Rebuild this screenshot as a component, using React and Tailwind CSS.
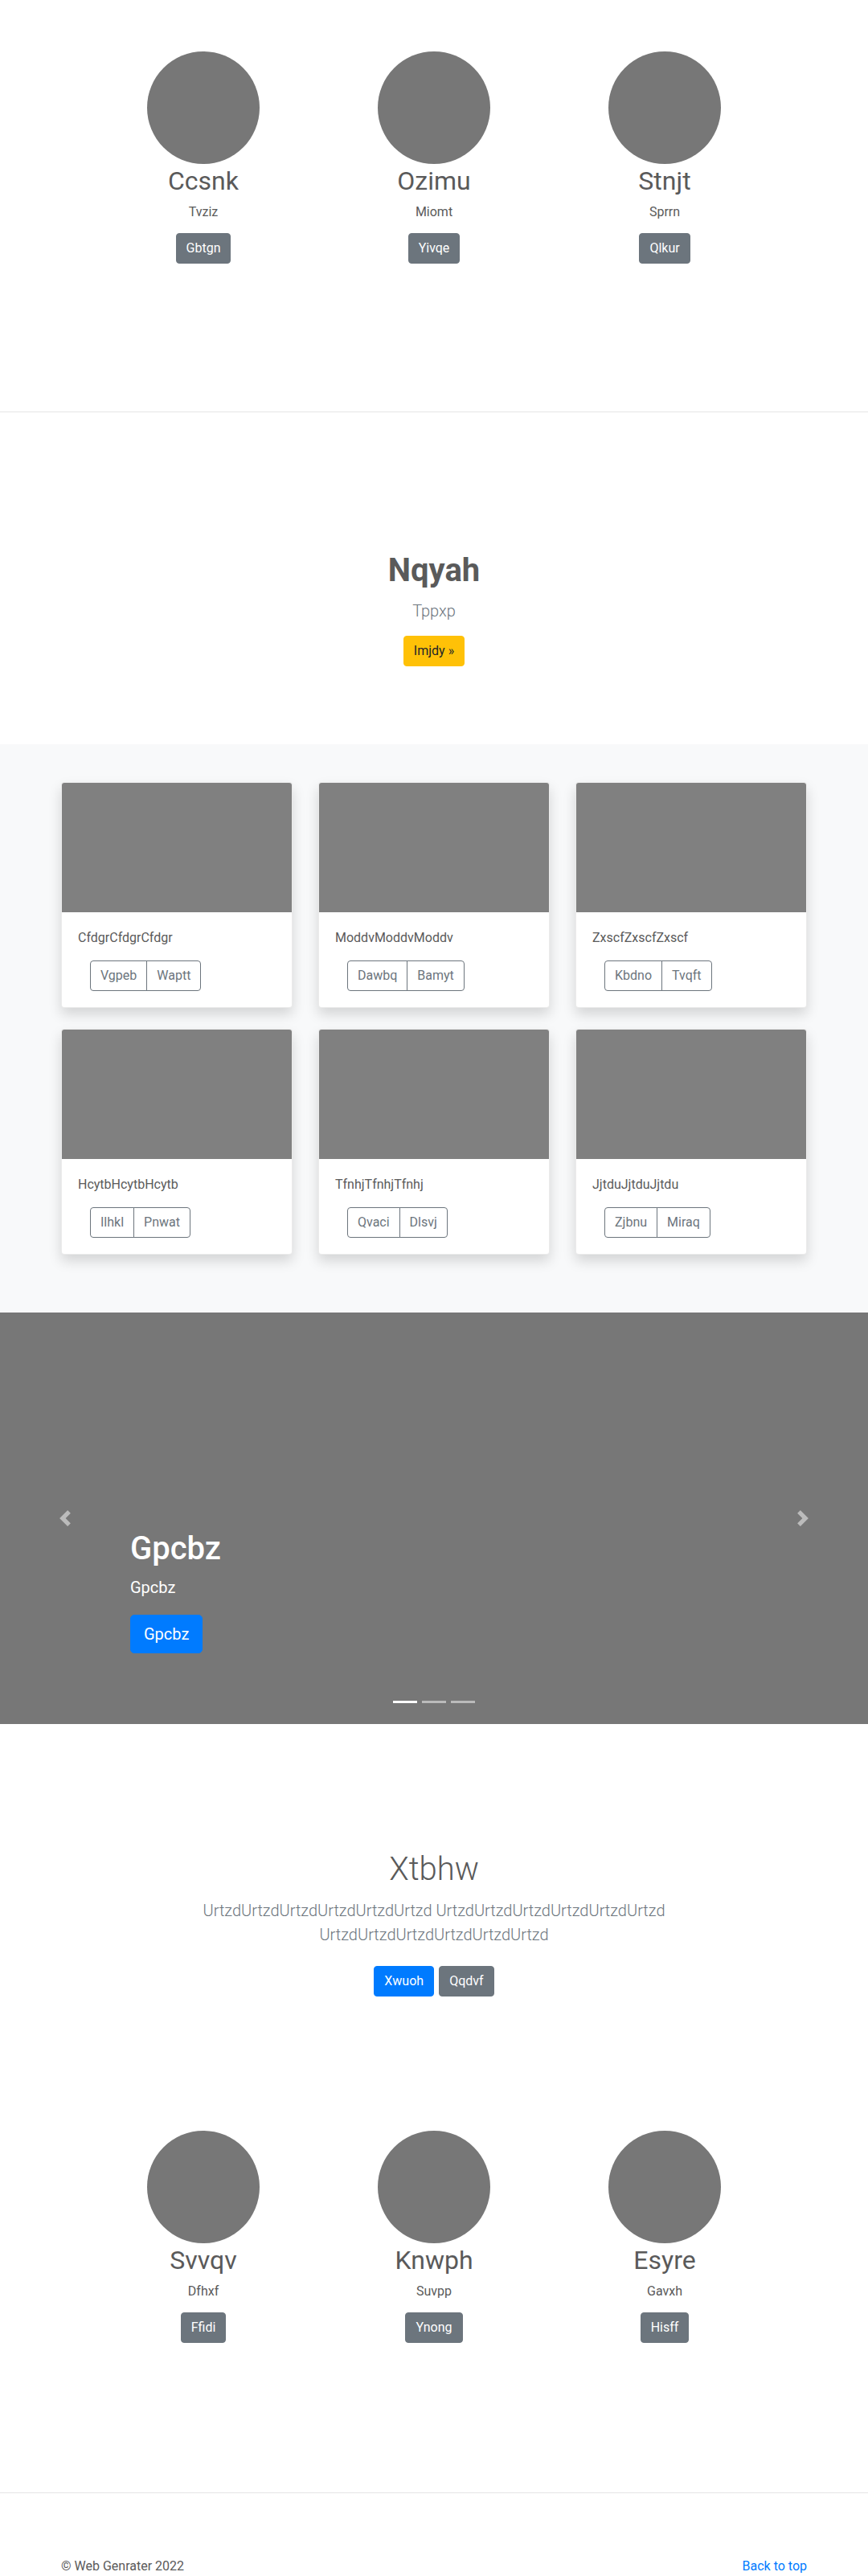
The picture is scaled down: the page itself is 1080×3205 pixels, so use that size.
const topTeam = [
  { name: "Ccsnk", role: "Tvziz", action: "Gbtgn" },
  { name: "Ozimu", role: "Miomt", action: "Yivqe" },
  { name: "Stnjt", role: "Sprrn", action: "Qlkur" },
];

const bottomTeam = [
  { name: "Svvqv", role: "Dfhxf", action: "Ffidi" },
  { name: "Knwph", role: "Suvpp", action: "Ynong" },
  { name: "Esyre", role: "Gavxh", action: "Hisff" },
];

const cards = [
  { text: "CfdgrCfdgrCfdgr", left: "Vgpeb", right: "Waptt" },
  { text: "ModdvModdvModdv", left: "Dawbq", right: "Bamyt" },
  { text: "ZxscfZxscfZxscf", left: "Kbdno", right: "Tvqft" },
  { text: "HcytbHcytbHcytb", left: "Ilhkl", right: "Pnwat" },
  { text: "TfnhjTfnhjTfnhj", left: "Qvaci", right: "Dlsvj" },
  { text: "JjtduJjtduJjtdu", left: "Zjbnu", right: "Miraq" },
];

/**
 * 圆形头像 + 名字 + 说明 + 灰色按钮，三列一排。
 */
function TeamRow({ people }) {
  return (
    <div className="mx-auto grid w-[861px] grid-cols-3">
      {people.map(function renderPerson(person) {
        return (
          <div key={person.name} className="flex flex-col items-center">
            <div className="h-[140px] w-[140px] rounded-full bg-[#777777]" />
            <h2 className="mt-[2px] text-[32px] font-normal leading-[38px] text-[#5a5a5a]">
              {person.name}
            </h2>
            <p className="mt-2 text-base leading-6 text-[#5a5a5a]">{person.role}</p>
            <a className="mt-[14px] rounded-[4px] border border-[#6c757d] bg-[#6c757d] px-3 py-1.5 text-base leading-6 text-white">
              {person.action}
            </a>
          </div>
        );
      })}
    </div>
  );
}

function Chevron({ flip }) {
  return (
    <svg
      width="20"
      height="20"
      viewBox="0 0 8 8"
      className={flip ? "rotate-180 fill-white opacity-50" : "fill-white opacity-50"}
    >
      <path d="M5.25 0l-4 4 4 4 1.5-1.5L4.25 4l2.5-2.5L5.25 0z" />
    </svg>
  );
}

export default function App() {
  return (
    <div className="bg-white font-['Roboto','Liberation_Sans',Arial,sans-serif] text-[#5a5a5a]">
      <section className="h-[512px] pt-[64px]">
        <TeamRow people={topTeam} />
      </section>
      <div className="h-px bg-[#e5e5e5]" />

      <section className="flex h-[413px] flex-col items-center pt-[173px]">
        <h2 className="text-[40px] font-bold leading-[48px] text-[#5a5a5a]">Nqyah</h2>
        <p className="mt-[11px] text-[20px] font-light leading-[30px] text-[#6c757d]">Tppxp</p>
        <a className="mt-4 rounded-[4px] border border-[#ffc107] bg-[#ffc107] px-3 py-1.5 text-base leading-6 text-[#212529]">
          Imjdy &raquo;
        </a>
      </section>

      <section className="h-[707px] bg-[#f8f9fa] pt-[47px]">
        <div className="mx-auto grid w-[928px] grid-cols-3 gap-x-8 gap-y-[26px]">
          {cards.map(function renderCard(card) {
            return (
              <div
                key={card.text}
                className="overflow-hidden rounded-[4px] border border-black/[0.08] bg-white shadow-[0_8px_16px_rgba(0,0,0,0.15)]"
              >
                <div className="h-[161px] bg-[#808080]" />
                <div className="p-5">
                  <p className="text-base leading-6 text-[#5a5a5a]">{card.text}</p>
                  <div className="ml-[15px] mt-4 flex">
                    <button className="rounded-l-[4px] border border-[#6c757d] px-3 py-1.5 text-base leading-6 text-[#6c757d]">
                      {card.left}
                    </button>
                    <button className="-ml-px rounded-r-[4px] border border-[#6c757d] px-3 py-1.5 text-base leading-6 text-[#6c757d]">
                      {card.right}
                    </button>
                  </div>
                </div>
              </div>
            );
          })}
        </div>
      </section>

      <section className="relative h-[512px] overflow-hidden bg-[#777777]">
        <div className="absolute bottom-0 left-0 top-0 flex w-[15%] items-center justify-center">
          <Chevron />
        </div>
        <div className="absolute bottom-0 right-0 top-0 flex w-[15%] items-center justify-center">
          <Chevron flip />
        </div>
        <div className="absolute bottom-[88px] left-[15%] right-[15%] flex flex-col items-start text-white">
          <h1 className="text-[40px] font-medium leading-[48px]">Gpcbz</h1>
          <p className="mt-[9px] text-[20px] leading-[30px]">Gpcbz</p>
          <a className="mt-[19px] rounded-[5px] border border-[#007bff] bg-[#007bff] px-4 py-2 text-[20px] leading-[30px] text-white">
            Gpcbz
          </a>
        </div>
        <div className="absolute bottom-[26px] left-0 right-0 flex justify-center gap-1.5">
          <span className="h-[3px] w-[30px] bg-white" />
          <span className="h-[3px] w-[30px] bg-white opacity-50" />
          <span className="h-[3px] w-[30px] bg-white opacity-50" />
        </div>
      </section>

      <section className="h-[956px] pt-[157px]">
        <div className="flex flex-col items-center text-center">
          <h1 className="text-[40px] font-light leading-[48px] text-[#5a5a5a]">Xtbhw</h1>
          <p className="mt-3 max-w-[610px] text-[20px] font-light leading-[30px] text-[#6c757d]">
            UrtzdUrtzdUrtzdUrtzdUrtzdUrtzd UrtzdUrtzdUrtzdUrtzdUrtzdUrtzd UrtzdUrtzdUrtzdUrtzdUrtzdUrtzd
          </p>
          <div className="mt-6 flex gap-1.5">
            <a className="rounded-[4px] border border-[#007bff] bg-[#007bff] px-3 py-1.5 text-base leading-6 text-white">
              Xwuoh
            </a>
            <a className="rounded-[4px] border border-[#6c757d] bg-[#6c757d] px-3 py-1.5 text-base leading-6 text-white">
              Qqdvf
            </a>
          </div>
        </div>
        <div className="mt-[167px]">
          <TeamRow people={bottomTeam} />
        </div>
      </section>
      <div className="h-px bg-[#e5e5e5]" />

      <footer className="mx-auto flex w-[928px] justify-between pt-[79px] text-base leading-6">
        <p className="text-[#5a5a5a]">&copy; Web Genrater 2022</p>
        <a className="text-[#007bff]">Back to top</a>
      </footer>
    </div>
  );
}
